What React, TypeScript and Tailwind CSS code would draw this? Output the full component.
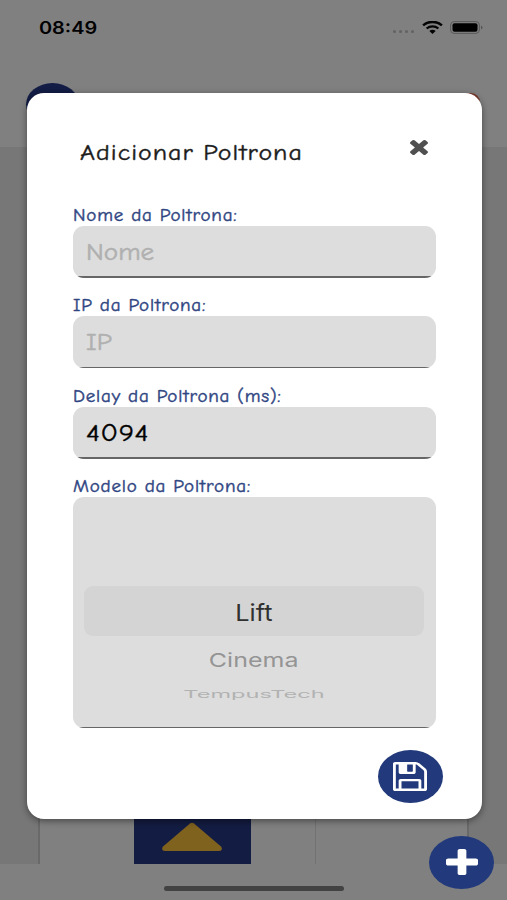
import type { ReactNode } from "react";

const hand =
  "font-['Comic_Neue','Comic_Sans_MS',Inter,sans-serif] [font-feature-settings:'cv11','cv08'] whitespace-nowrap inline-block origin-left";

function StatusBar() {
  return (
    <div className="flex h-[55px] items-center justify-between pl-[39px] pr-6">
      <span className="mt-[2px] inline-block origin-left scale-x-[1.17] font-[Inter,sans-serif] text-[17px] font-semibold leading-none text-black">
        08:49
      </span>
      <div className="flex items-center">
        <div className="mr-2 mt-2 flex gap-[3px]">
          {[0, 1, 2, 3].map((i) => (
            <span key={i} className="h-[3px] w-[3px] rounded-full bg-[#626262]" />
          ))}
        </div>
        <svg className="mr-[7px] h-[13px] w-[21px]" viewBox="0 0 21 13" fill="none" stroke="#050505">
          <path d="M1.1 4.4C6.300-.3 14.700-.3 19.900 4.400" strokeWidth="2.500" />
          <path d="M4.600 7.500C8 4.600 13 4.600 16.400 7.500" strokeWidth="2.300" />
          <path d="M7.300 9.900Q10.500 7.600 13.700 9.900L10.500 13Z" fill="#050505" stroke="none" />
        </svg>
        <svg className="h-[13px] w-[33px]" viewBox="0 0 33 13">
          <rect x=".6" y=".6" width="28.800" height="11.800" rx="3.500" fill="none" stroke="#595959" />
          <rect x="2.500" y="2.200" width="25" height="8.600" rx="2" fill="#000" />
          <path d="M31 4.500q3 2 0 4z" fill="#555" />
        </svg>
      </div>
    </div>
  );
}

function Backdrop() {
  return (
    <div className="absolute inset-0 flex flex-col bg-[#808080]">
      <StatusBar />
      <div className="flex h-[92px] items-start justify-between pl-[26px] pr-[27px] pt-[28px]">
        <div className="h-[43px] w-[53px] rounded-[50%] bg-[#131d45]" />
        <div className="mt-[10px] h-5 w-6 rounded-tr-[9px] bg-[#7c3a2c]" />
      </div>
      <div className="flex h-[717px] bg-[#777777] pl-[38px] pr-[38px]">
        <div className="flex flex-1 items-end border-x-2 border-[#696969] bg-[#808080]">
          <div className="ml-[94px] flex h-[90px] w-[117px] items-end justify-center bg-[#131c42] pb-[13px] pr-[2px]">
            <svg className="h-[29px] w-[60px]" viewBox="0 0 60 29">
              <path d="M28 1.500Q30 .2 32 1.500L59 24.500Q61.500 28.500 57 29H3Q-1.500 28.500 1 24.500Z" fill="#80621f" />
            </svg>
          </div>
          <div className="ml-[64px] h-full w-px bg-[#727272]" />
        </div>
      </div>
      <div className="flex flex-1 items-end justify-center pb-[9px]">
        <div className="h-[5px] w-[180px] rounded-full bg-[#424242]" />
      </div>
    </div>
  );
}

function Field({ label, children }: { label: string; children: ReactNode }) {
  return (
    <div className="flex flex-col items-start">
      <span
        className={`${hand} h-[20px] scale-x-[1.12] text-[17px] leading-[19px] tracking-[0.7px] text-[#2f4582] [-webkit-text-stroke:0.4px_#2f4582]`}
      >
        {label}
      </span>
      {children}
    </div>
  );
}

const box = "w-[363px] overflow-hidden rounded-[11px] bg-[#dddddd]";

function TextBox({ children }: { children: ReactNode }) {
  return (
    <div className={`${box} flex h-[52px] flex-col`}>
      <div className="flex flex-1 items-center pl-[13px] pt-[2px]">{children}</div>
      <div className="h-[1.500px] bg-[#666666]" />
    </div>
  );
}

function Modal() {
  return (
    <div className="relative flex h-[726px] w-[455px] flex-col rounded-[17px] bg-white px-[46px] shadow-[0_2px_7px_rgba(0,0,0,0.45)]">
      <div className="flex h-[112.500px] items-start justify-between pl-[7px] pr-2">
        <h1
          className={`${hand} mt-[45px] scale-x-[1.125] text-[23px] leading-[30px] tracking-[0.9px] text-[#1c1c1c] [-webkit-text-stroke:0.4px_#1c1c1c]`}
        >
          Adicionar Poltrona
        </h1>
        <svg className="mt-[47px] h-[15px] w-[18px]" viewBox="302 366 1188 1188" preserveAspectRatio="none" fill="#505050">
          <path d="M1490 1322q0 40-28 68l-136 136q-28 28-68 28t-68-28l-294-294-294 294q-28 28-68 28t-68-28l-136-136q-28-28-28-68t28-68l294-294-294-294q-28-28-28-68t28-68l136-136q28-28 68-28t68 28l294 294 294-294q28-28 68-28t68 28l136 136q28 28 28 68t-28 68l-294 294 294 294q28 28 28 68z" />
        </svg>
      </div>
      <div className="flex flex-col gap-[18.500px]">
        <Field label="Nome da Poltrona:">
          <TextBox>
            <span className={`${hand} scale-x-[1.13] text-[24px] text-[#b0b0b0] [-webkit-text-stroke:0.5px_#b0b0b0]`}>
              Nome
            </span>
          </TextBox>
        </Field>
        <Field label="IP da Poltrona:">
          <TextBox>
            <span className={`${hand} scale-x-[1.13] text-[24px] text-[#b0b0b0] [-webkit-text-stroke:0.5px_#b0b0b0]`}>
              IP
            </span>
          </TextBox>
        </Field>
        <Field label="Delay da Poltrona (ms):">
          <TextBox>
            <span className={`${hand} scale-x-[1.2] text-[24px] tracking-[0.5px] text-black [-webkit-text-stroke:0.35px_#000]`}>
              4094
            </span>
          </TextBox>
        </Field>
        <Field label="Modelo da Poltrona:">
          <div className={`${box} flex h-[231px] flex-col justify-between pt-[89px]`}>
            <div className="flex flex-col items-center font-[Inter,sans-serif]">
              <div className="flex h-[50px] w-[340px] items-center justify-center rounded-[9px] bg-[#d4d4d4] pt-[4px]">
                <span className="inline-block scale-x-[1.1] text-[23px] text-[#303030]">Lift</span>
              </div>
              <span className="mt-[9px] inline-block scale-x-[1.19] scale-y-[0.9] text-[21px] leading-8 text-[#949494]">
                Cinema
              </span>
              <span className="mt-[7px] inline-block scale-x-[1.31] scale-y-[0.6] text-[18px] leading-5 text-[#b2b2b2]">
                TempusTech
              </span>
            </div>
            <div className="h-[1.500px] bg-[#666666]" />
          </div>
        </Field>
      </div>
      <button
        type="button"
        className="mr-[-7px] mt-[21.500px] flex h-[53px] w-[65px] items-center justify-center self-end rounded-[50%] bg-[#223a7b]"
      >
        <svg className="h-[29px] w-[34px]" viewBox="0 128 1536 1536" preserveAspectRatio="none" fill="#fff">
          <path d="M384 1536h768v-384h-768v384zM1280 1536h128v-896q0-14-10-38.500t-20-34.500l-281-281q-10-10-34-20t-39-10v416q0 40-28 68t-68 28h-576q-40 0-68-28t-28-68v-416h-128v1280h128v-416q0-40 28-68t68-28h832q40 0 68 28t28 68v416zM896 608v-320q0-13-9.500-22.500t-22.500-9.500h-192q-13 0-22.500 9.500t-9.500 22.500v320q0 13 9.500 22.500t22.500 9.500h192q13 0 22.500-9.500t9.500-22.500zM1536 640v928q0 40-28 68t-68 28h-1344q-40 0-68-28t-28-68v-1344q0-40 28-68t68-28h928q40 0 88 20t76 48l280 280q28 28 48 76t20 88z" />
        </svg>
      </button>
    </div>
  );
}

export default function App() {
  return (
    <div className="relative h-[900px] w-[507px] overflow-hidden">
      <Backdrop />
      <div className="pl-[26.500px] pt-[93px]">
        <Modal />
      </div>
      <button
        type="button"
        className="absolute bottom-[11px] right-[13px] flex h-[53px] w-[65px] items-center justify-center rounded-[50%] bg-[#223a7b]"
      >
        <svg className="mb-[2px] h-[26px] w-[32px]" viewBox="192 128 1408 1408" preserveAspectRatio="none" fill="#fff">
          <path d="M1600 736v192q0 40-28 68t-68 28h-416v416q0 40-28 68t-68 28h-192q-40 0-68-28t-28-68v-416h-416q-40 0-68-28t-28-68v-192q0-40 28-68t68-28h416v-416q0-40 28-68t68-28h192q40 0 68 28t28 68v416h416q40 0 68 28t28 68z" />
        </svg>
      </button>
    </div>
  );
}
